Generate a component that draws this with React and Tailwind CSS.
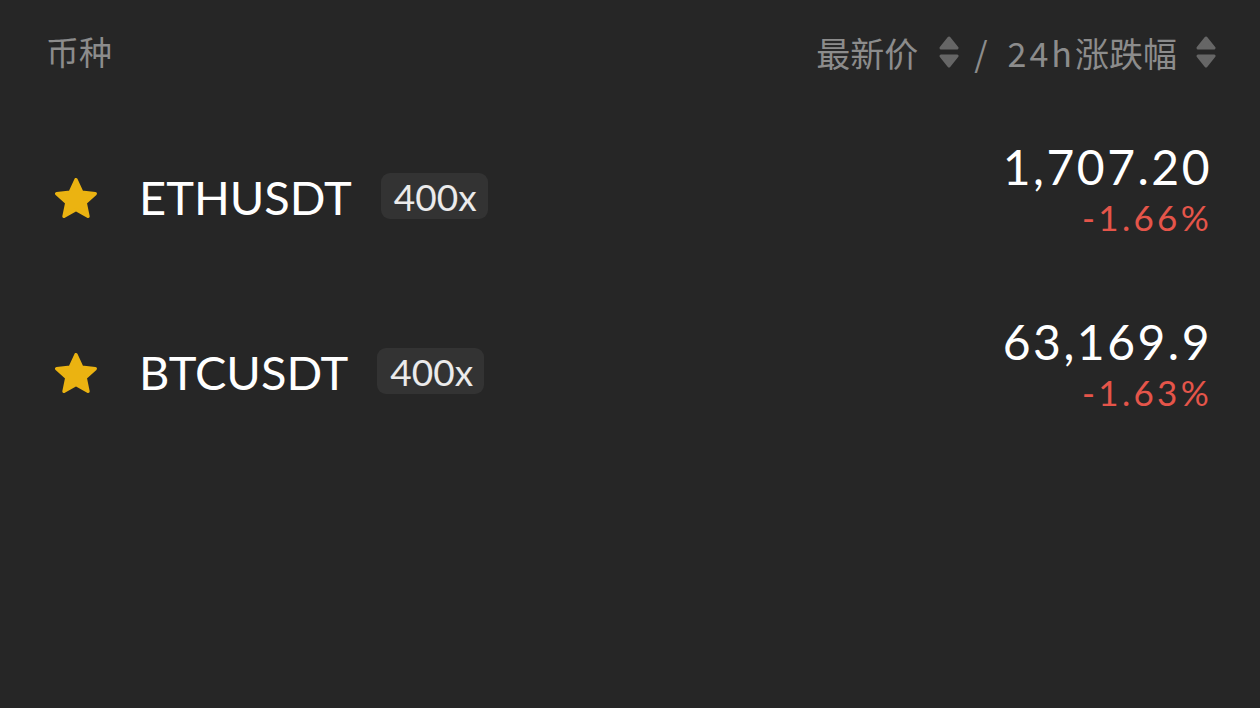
import React from 'react'

const rows = [
  { symbol: 'ETHUSDT', lev: '400x', price: '1,707.20', change: '-1.66%' },
  { symbol: 'BTCUSDT', lev: '400x', price: '63,169.9', change: '-1.63%' },
]

function SortIcon() {
  return (
    <svg width="22" height="32" viewBox="0 0 22 32" className="shrink-0">
      <path d="M11 2 L19 12 L3 12 Z" fill="#666666" stroke="#666666" strokeWidth="3" strokeLinejoin="round" />
      <path d="M11 30 L19 20 L3 20 Z" fill="#666666" stroke="#666666" strokeWidth="3" strokeLinejoin="round" />
    </svg>
  )
}

function Star() {
  return (
    <svg width="42" height="40" viewBox="2.2 2 19.6 18.7" className="shrink-0">
      <path
        d="M12 2.8 L14.7 8.6 L21 9.3 L16.3 13.6 L17.6 19.9 L12 16.7 L6.4 19.9 L7.7 13.6 L3 9.3 L9.3 8.6 Z"
        fill="#ebb311"
        stroke="#ebb311"
        strokeWidth="1.6"
        strokeLinejoin="round"
      />
    </svg>
  )
}

export default function App() {
  const cjk = { fontFamily: '"Noto Sans CJK SC", "Noto Sans", sans-serif' }
  const latin = { fontFamily: 'Lato, "Noto Sans CJK SC", sans-serif' }

  return (
    <div className="w-[1260px] h-[708px] bg-[#262626] overflow-hidden">
      {/* header */}
      <div className="h-[104px] flex items-center justify-between pl-[46px] pr-[43px] text-[#8c8c8c]" style={cjk}>
        <span className="text-[33px]">币种</span>
        <div className="flex items-center text-[34px]">
          <span>最新价</span>
          <span className="ml-[20px]"><SortIcon /></span>
          <span className="ml-[14px] mr-[20px]">/</span>
          <span><span className="tracking-[3px]">24h</span>涨跌幅</span>
          <span className="ml-[18px]"><SortIcon /></span>
        </div>
      </div>

      <div className="mt-[6px]">
        {rows.map(r => (
          <div key={r.symbol} className="h-[175px] flex items-center justify-between pl-[55px] pr-[48px]" style={latin}>
            <div className="flex items-center">
              <Star />
              <span className="ml-[42px] text-[47px] text-white leading-none">{r.symbol}</span>
              <span className="ml-[29px] h-[46px] pl-[13px] pr-[11px] -mt-[3px] rounded-[9px] bg-[#333333] text-[37px] text-white/90 flex items-center leading-none">
                {r.lev}
              </span>
            </div>
            <div className="flex flex-col items-end pb-[18px]">
              <span className="text-[48px] text-white leading-[56px] tracking-[2.5px]">{r.price}</span>
              <span className="text-[35px] text-[#e5554a] leading-[44px] tracking-[3.3px]">{r.change}</span>
            </div>
          </div>
        ))}
      </div>
    </div>
  )
}
